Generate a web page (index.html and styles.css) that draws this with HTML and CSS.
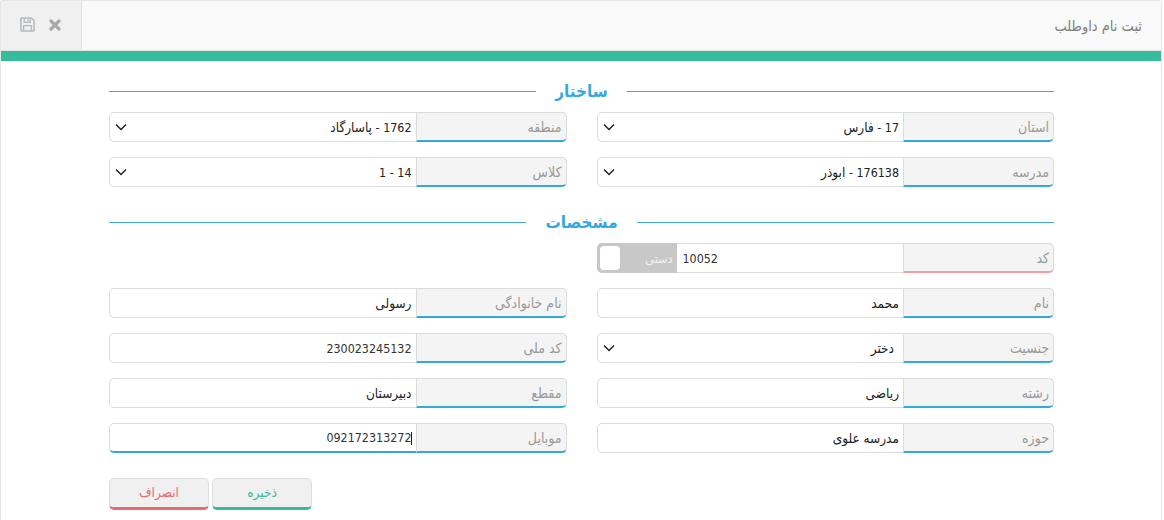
FILE: index.html
```html
<!DOCTYPE html>
<html lang="fa">
<head>
<meta charset="utf-8">
<title>ثبت نام داوطلب</title>
<link rel="stylesheet" href="styles.css">
</head>
<body>
<div class="panel">
  <header class="panel-head">
    <div class="panel-actions">
      <svg class="icon-save" viewBox="0 0 16 16" width="15" height="15" aria-hidden="true"><path d="M1.5 1h10.7L15 3.800V14a1 1 0 0 1-1 1H2a1 1 0 0 1-1-1V1.500z" fill="none" stroke="#b4b8bc" stroke-width="1.600"/><path d="M4.500 1.500v4.200h6.500V1.500M8.500 2.500v2M3.800 14.500V9.200h8.400v5.300" fill="none" stroke="#b4b8bc" stroke-width="1.500"/></svg>
      <svg class="icon-close" viewBox="0 0 12 12" width="12" height="12" aria-hidden="true"><path d="M2 2l8 8M10 2l-8 8" stroke="#a9a9a9" stroke-width="3.200" stroke-linecap="round"/></svg>
    </div>
    <h1 class="panel-title">ثبت نام داوطلب</h1>
  </header>
  <form class="form" dir="rtl">
    <div class="section-title"><span>ساختار</span></div>
    <div class="grid">
      <div class="field"><label class="label">استان</label><div class="select" role="combobox"><span>17 - <span class="fa">فارس</span></span><svg class="chev" viewBox="0 0 12 8" width="12" height="8" aria-hidden="true"><path d="M1 1.500l5 5 5-5" fill="none" stroke="#222" stroke-width="1.500"/></svg></div></div>
      <div class="field"><label class="label">منطقه</label><div class="select" role="combobox"><span>1762 - <span class="fa">پاسارگاد</span></span><svg class="chev" viewBox="0 0 12 8" width="12" height="8" aria-hidden="true"><path d="M1 1.500l5 5 5-5" fill="none" stroke="#222" stroke-width="1.500"/></svg></div></div>
      <div class="field"><label class="label">مدرسه</label><div class="select" role="combobox"><span>176138 - <span class="fa">ابوذر</span></span><svg class="chev" viewBox="0 0 12 8" width="12" height="8" aria-hidden="true"><path d="M1 1.500l5 5 5-5" fill="none" stroke="#222" stroke-width="1.500"/></svg></div></div>
      <div class="field"><label class="label">کلاس</label><div class="select" role="combobox"><span>14 - 1</span><svg class="chev" viewBox="0 0 12 8" width="12" height="8" aria-hidden="true"><path d="M1 1.500l5 5 5-5" fill="none" stroke="#222" stroke-width="1.500"/></svg></div></div>
    </div>
    <div class="section-title section-two"><span>مشخصات</span></div>
    <div class="grid">
      <div class="field"><label class="label label-red">کد</label><input class="control control-ltr" value="10052"><div class="toggle"><span class="toggle-text">دستی</span><span class="toggle-knob"></span></div></div>
      <div></div>
      <div class="field"><label class="label">نام</label><input class="control control-fa" value="محمد"></div>
      <div class="field"><label class="label">نام خانوادگی</label><input class="control control-fa" value="رسولی"></div>
      <div class="field"><label class="label">جنسیت</label><div class="select select-indent" role="combobox"><span class="fa">دختر</span><svg class="chev" viewBox="0 0 12 8" width="12" height="8" aria-hidden="true"><path d="M1 1.500l5 5 5-5" fill="none" stroke="#222" stroke-width="1.500"/></svg></div></div>
      <div class="field"><label class="label">کد ملی</label><input class="control" value="230023245132"></div>
      <div class="field"><label class="label">رشته</label><input class="control control-fa" value="ریاضی"></div>
      <div class="field"><label class="label">مقطع</label><input class="control control-fa" value="دبیرستان"></div>
      <div class="field"><label class="label">حوزه</label><input class="control control-fa" value="مدرسه علوی"></div>
      <div class="field field-focus"><label class="label">موبایل</label><div class="caret-wrap"><input class="control" value="092172313272"></div></div>
    </div>
    <div class="buttons" dir="ltr">
      <button type="button" class="btn btn-cancel">انصراف</button>
      <button type="button" class="btn btn-save">ذخیره</button>
    </div>
  </form>
</div>
</body>
</html>
```
FILE: styles.css
```css
* { box-sizing: border-box; }
html, body { margin: 0; height: 520px; overflow: hidden; background: #fff; }
body { font-family: "DejaVu Sans Condensed", "DejaVu Sans", sans-serif; font-size: 12.4px; color: #333; }
.panel { width: 1162px; height: 520px; border: 1px solid #e6e6e6; border-bottom: 0; border-radius: 3px 3px 0 0; }
.panel-head { display: flex; height: 50px; background: #f9f9f9; border-bottom: 1px solid #e2e2e2; }
.panel-actions { display: flex; align-items: center; gap: 14px; width: 81px; padding: 0 0 2px 19px; background: #f0f0f0; border-right: 1px solid #e2e2e2; }
.panel-title { flex: 1; margin: 0; padding: 0 19px 0 0; text-align: right; direction: rtl; font-size: 14.500px; line-height: 50px; font-weight: normal; color: #808080; }
.form { border-top: 10px solid #36bc9b; padding: 15px 107px 0 108px; }
.section-title { display: flex; align-items: center; gap: 19px; height: 30px; margin-bottom: 6px; color: #36a9dc; font-size: 17px; font-weight: bold; }
.section-title::before, .section-title::after { content: ""; flex: 1; height: 1px; background: #3ea9d9; }
.section-two { margin-top: 20px; }
.grid { display: grid; grid-template-columns: 1fr 1fr; gap: 15px 30px; }
.field { display: flex; height: 30px; border: 1px solid #dcdcdc; border-radius: 5px; background: #fff; }
.field-focus { border-bottom: 2px solid #36a9dc; }
.label { flex: 0 0 151px; margin: -1px -1px -1px 0; padding: 0 4px 0 0; line-height: 28px; background: #f4f4f4; border: 1px solid #dcdcdc; border-bottom: 2px solid #36a9dc; border-radius: 0 5px 5px 0; color: #999; font-size: 14px; }
.field-focus .label { margin-bottom: -2px; border-bottom-left-radius: 0; }
.label-red { border-bottom-color: #f4a0a2; }
.select { position: relative; display: flex; align-items: center; flex: 1; min-width: 0; padding: 0 4px; color: #222; }
.select-indent { padding-right: 9px; }
.fa { font-size: 13.500px; }
.control { display: block; width: 100%; height: 100%; flex: 1; min-width: 0; padding: 0 4px; border: 0; outline: 0; background: transparent; color: #333; font: inherit; }
.control-fa { font-size: 13.500px; color: #222; }
.control-ltr { direction: ltr; text-align: left; padding-left: 6px; }
.caret-wrap { position: relative; flex: 1; min-width: 0; }
.caret-wrap::after { content: ""; position: absolute; right: 4px; top: 8px; width: 1px; height: 13px; background: #222; }
.chev { position: absolute; left: 5px; top: 10px; }
.toggle { display: flex; align-items: center; justify-content: space-between; flex: 0 0 80px; margin: -1px 0 -1px -1px; padding: 0 4px 0 3px; background: #c8c8c8; border-radius: 5px 0 0 5px; direction: rtl; }
.toggle-text { color: #f2f2f2; font-size: 12.500px; }
.toggle-knob { width: 20px; height: 24px; border-radius: 4px; background: #fff; }
.buttons { display: flex; gap: 3px; margin-top: 25px; }
.btn { width: 100px; height: 32px; padding: 0 0 3px; background: #f0f0f0; border: 1px solid #dedede; border-bottom-width: 3px; border-radius: 5px; font: inherit; font-size: 13.500px; }
.btn-cancel { color: #e96a6e; border-bottom-color: #e96a6e; }
.btn-save { color: #36bc9b; border-bottom-color: #36bc9b; }
```
